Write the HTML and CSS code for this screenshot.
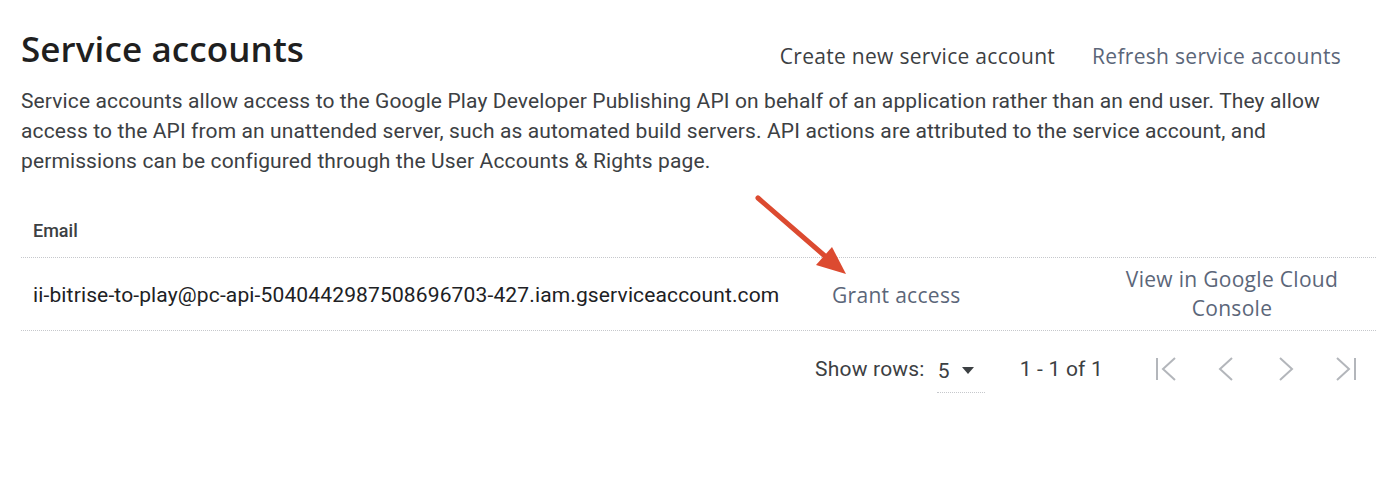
FILE: index.html
```html
<!DOCTYPE html>
<html lang="en">
<head>
<meta charset="utf-8">
<title>Service accounts</title>
<link rel="stylesheet" href="styles.css">
</head>
<body>
<main class="page">
  <header class="head">
    <h1 class="title">Service accounts</h1>
    <div class="actions">
      <button class="btn btn-dark">Create new service account</button>
      <button class="btn btn-link">Refresh service accounts</button>
    </div>
  </header>
  <p class="desc">Service accounts allow access to the Google Play Developer Publishing API on behalf of an application rather than an end user. They allow access to the API from an unattended server, such as automated build servers. API actions are attributed to the service account, and permissions can be configured through the User Accounts &amp; Rights page.</p>

  <div class="table">
    <div class="thead">
      <div class="th">Email</div>
    </div>
    <div class="row">
      <div class="cell-email">ii-bitrise-to-play@pc-api-5040442987508696703-427.iam.gserviceaccount.com</div>
      <div class="cell-grant"><span class="link">Grant access</span></div>
      <div class="cell-view"><span class="link">View in Google Cloud Console</span></div>
    </div>
    <div class="pager">
      <span class="pager-label">Show rows:</span>
      <span class="select"><span class="select-val">5</span><span class="caret"></span></span>
      <span class="range">1 - 1 of 1</span>
      <div class="nav">
        <svg class="nav-ic" viewBox="0 0 24 24" width="24" height="24"><path d="M3 1v22" stroke="#b3b6bb" stroke-width="2" fill="none"/><path d="M21 1 L9 12 L21 23" stroke="#b3b6bb" stroke-width="2" fill="none"/></svg>
        <svg class="nav-ic" viewBox="0 0 24 24" width="24" height="24"><path d="M18 1 L6 12 L18 23" stroke="#b3b6bb" stroke-width="2" fill="none"/></svg>
        <svg class="nav-ic" viewBox="0 0 24 24" width="24" height="24"><path d="M6 1 L18 12 L6 23" stroke="#b3b6bb" stroke-width="2" fill="none"/></svg>
        <svg class="nav-ic" viewBox="0 0 24 24" width="24" height="24"><path d="M3 1 L15 12 L3 23" stroke="#b3b6bb" stroke-width="2" fill="none"/><path d="M21 1v22" stroke="#b3b6bb" stroke-width="2" fill="none"/></svg>
      </div>
    </div>
  </div>

  <svg class="arrow" width="110" height="100" viewBox="0 0 110 100">
    <path d="M8 8 L76 67" stroke="#dc4a30" stroke-width="5" stroke-linecap="round" fill="none"/>
    <path d="M66 75 L82 57 L96 84 Z" fill="#dc4a30"/>
  </svg>
</main>
</body>
</html>
```

FILE: styles.css
```css
* { box-sizing: border-box; }
html, body { margin: 0; padding: 0; background: #fff; }
body { font-family: Roboto, "Noto Sans", Arial, sans-serif; color: #3c4043; }

.page {
  position: relative;
  width: 1400px;
  height: 503px;
  padding: 0 24px 0 21px;
}

.head {
  display: flex;
  justify-content: space-between;
  align-items: flex-end;
  padding-top: 27px;
}
.title {
  margin: 0;
  font-family: "Open Sans", sans-serif;
  font-weight: 600;
  font-size: 35px;
  line-height: 44px;
  color: #1f1f1f;
  letter-spacing: 0.1px;
}
.actions {
  display: flex;
  gap: 37px;
  padding-right: 35px;
  padding-bottom: 1px;
}
.btn {
  border: 0;
  background: none;
  padding: 0;
  font-family: "Open Sans", sans-serif;
  font-size: 21px;
  letter-spacing: 0.3px;
  line-height: 28px;
  cursor: pointer;
}
.btn-dark { color: #3c4043; }
.btn-link { color: #5b6679; }

.desc {
  margin: 15px 0 0 0;
  font-size: 21px;
  letter-spacing: 0.12px;
  line-height: 30px;
  color: #3c4043;
}

.table { margin-top: 24px; }
.thead {
  height: 58px;
  padding-top: 4px;
  display: flex;
  align-items: center;
  border-bottom: 1px dotted #c6c8cc;
}
.th {
  padding-left: 12px;
  font-size: 18px;
  font-weight: 500;
  color: #3c4043;
}
.row {
  display: flex;
  align-items: center;
  height: 73px;
  padding-top: 2px;
  border-bottom: 1px dotted #c6c8cc;
}
.cell-email {
  width: 811px;
  padding-left: 12px;
  font-size: 21px;
  letter-spacing: 0.14px;
  color: #202124;
}
.cell-grant { width: 280px; }
.cell-view {
  width: 240px;
  text-align: center;
  line-height: 29px;
}
.link {
  font-family: "Open Sans", sans-serif;
  font-size: 21px;
  letter-spacing: 0.3px;
  color: #5b6679;
}
.cell-view .link { display: inline-block; width: 236px; }

.pager {
  display: flex;
  align-items: center;
  justify-content: flex-end;
  height: 76px;
  padding-right: 18px;
  font-size: 21px;
  letter-spacing: 0.2px;
  color: #3c4043;
}
.pager-label { margin-right: 12px; }
.select {
  display: flex;
  align-items: center;
  width: 48px;
  height: 44px;
  padding-left: 1px;
  border-bottom: 1px dotted #c6c8cc;
  margin-top: 4px;
}
.select-val { color: #3c4043; }
.caret {
  margin-left: 12px;
  width: 0; height: 0;
  border-left: 6px solid transparent;
  border-right: 6px solid transparent;
  border-top: 7px solid #3c4043;
}
.range { margin-left: 35px; margin-right: 51px; }
.nav { display: flex; gap: 36px; }
.nav-ic { display: block; }

.arrow {
  position: absolute;
  left: 750px;
  top: 190px;
}
```
